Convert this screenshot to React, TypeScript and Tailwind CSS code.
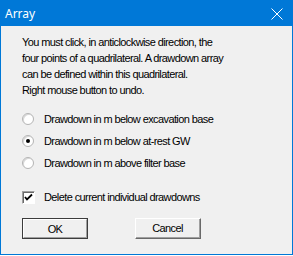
import { useState } from "react";

const font = "font-['Liberation_Sans',Arial,sans-serif]";

const Radio = ({ checked, label, onClick }: { checked: boolean; label: string; onClick: () => void }) => (
  <div className="flex items-center h-[22px] cursor-default" onClick={onClick}>
    <span className="w-[12px] h-[12px] rounded-full border border-[#b4b4b4] bg-white flex items-center justify-center shadow-[inset_1px_1px_0_#d8d8d8]">
      {checked && <span className="w-[4px] h-[4px] rounded-full bg-black" />}
    </span>
    <span className="ml-[10px]">{label}</span>
  </div>
);

export default function App() {
  const [mode, setMode] = useState(1);
  const [del, setDel] = useState(true);

  const options = [
    "Drawdown in m below excavation base",
    "Drawdown in m below at-rest GW",
    "Drawdown in m above filter base",
  ];

  return (
    <div className={`w-[293px] h-[256px] bg-white ${font}`}>
      <div className="w-[293px] h-[255px] border border-[#0078d7] bg-[#f0f0f0] flex flex-col">
        {/* Title bar */}
        <div className="h-[25px] bg-[#0078d7] flex items-center justify-between pl-[4px] pr-[9px]">
          <span className="text-white text-[12px] font-['Noto_Sans',sans-serif]">Array</span>
          <svg width="12" height="12" viewBox="0 0 12 12">
            <path d="M0.5 0.5 L11.5 11.5 M11.5 0.5 L0.5 11.5" stroke="white" strokeWidth="1" />
          </svg>
        </div>

        <div className="pl-[21px] pt-[8px] text-[11px] tracking-[-0.6px] text-black leading-[16px]">
          <p>
            You must click, in anticlockwise direction, the
            <br />
            four points of a quadrilateral. A drawdown array
            <br />
            can be defined within this quadrilateral.
            <br />
            Right mouse button to undo.
          </p>

          <div className="mt-[10px] flex flex-col">
            {options.map((o, i) => (
              <Radio key={o} checked={mode === i} label={o} onClick={() => setMode(i)} />
            ))}
          </div>

          <div className="mt-[12px] flex items-center h-[22px] cursor-default" onClick={() => setDel(!del)}>
            <span className="w-[13px] h-[13px] bg-white border-t border-l border-[#a0a0a0] border-r border-b border-r-white border-b-white shadow-[inset_1px_1px_0_#696969] flex items-center justify-center">
              {del && (
                <svg width="9" height="9" viewBox="0 0 9 9">
                  <path d="M1 4 L3 6.5 L8 1.5" stroke="black" strokeWidth="1.8" fill="none" />
                </svg>
              )}
            </span>
            <span className="ml-[9px]">Delete current individual drawdowns</span>
          </div>

          <div className="mt-[10px] flex gap-[47px]">
            <button className="w-[66px] h-[21px] border border-[#3c3c3c] bg-[#f0f0f0]">
              <span className="flex items-center justify-center w-full h-full border-t border-l border-white border-r border-b border-r-[#a0a0a0] border-b-[#a0a0a0]">
                OK
              </span>
            </button>
            <button className="w-[66px] h-[21px] border-t border-l border-white border-r border-b border-r-[#696969] border-b-[#696969] bg-[#f0f0f0]">
              <span className="flex items-center justify-center w-full h-full border-r border-b border-[#a0a0a0] border-t-0 border-l-0">
                Cancel
              </span>
            </button>
          </div>
        </div>
      </div>
    </div>
  );
}
